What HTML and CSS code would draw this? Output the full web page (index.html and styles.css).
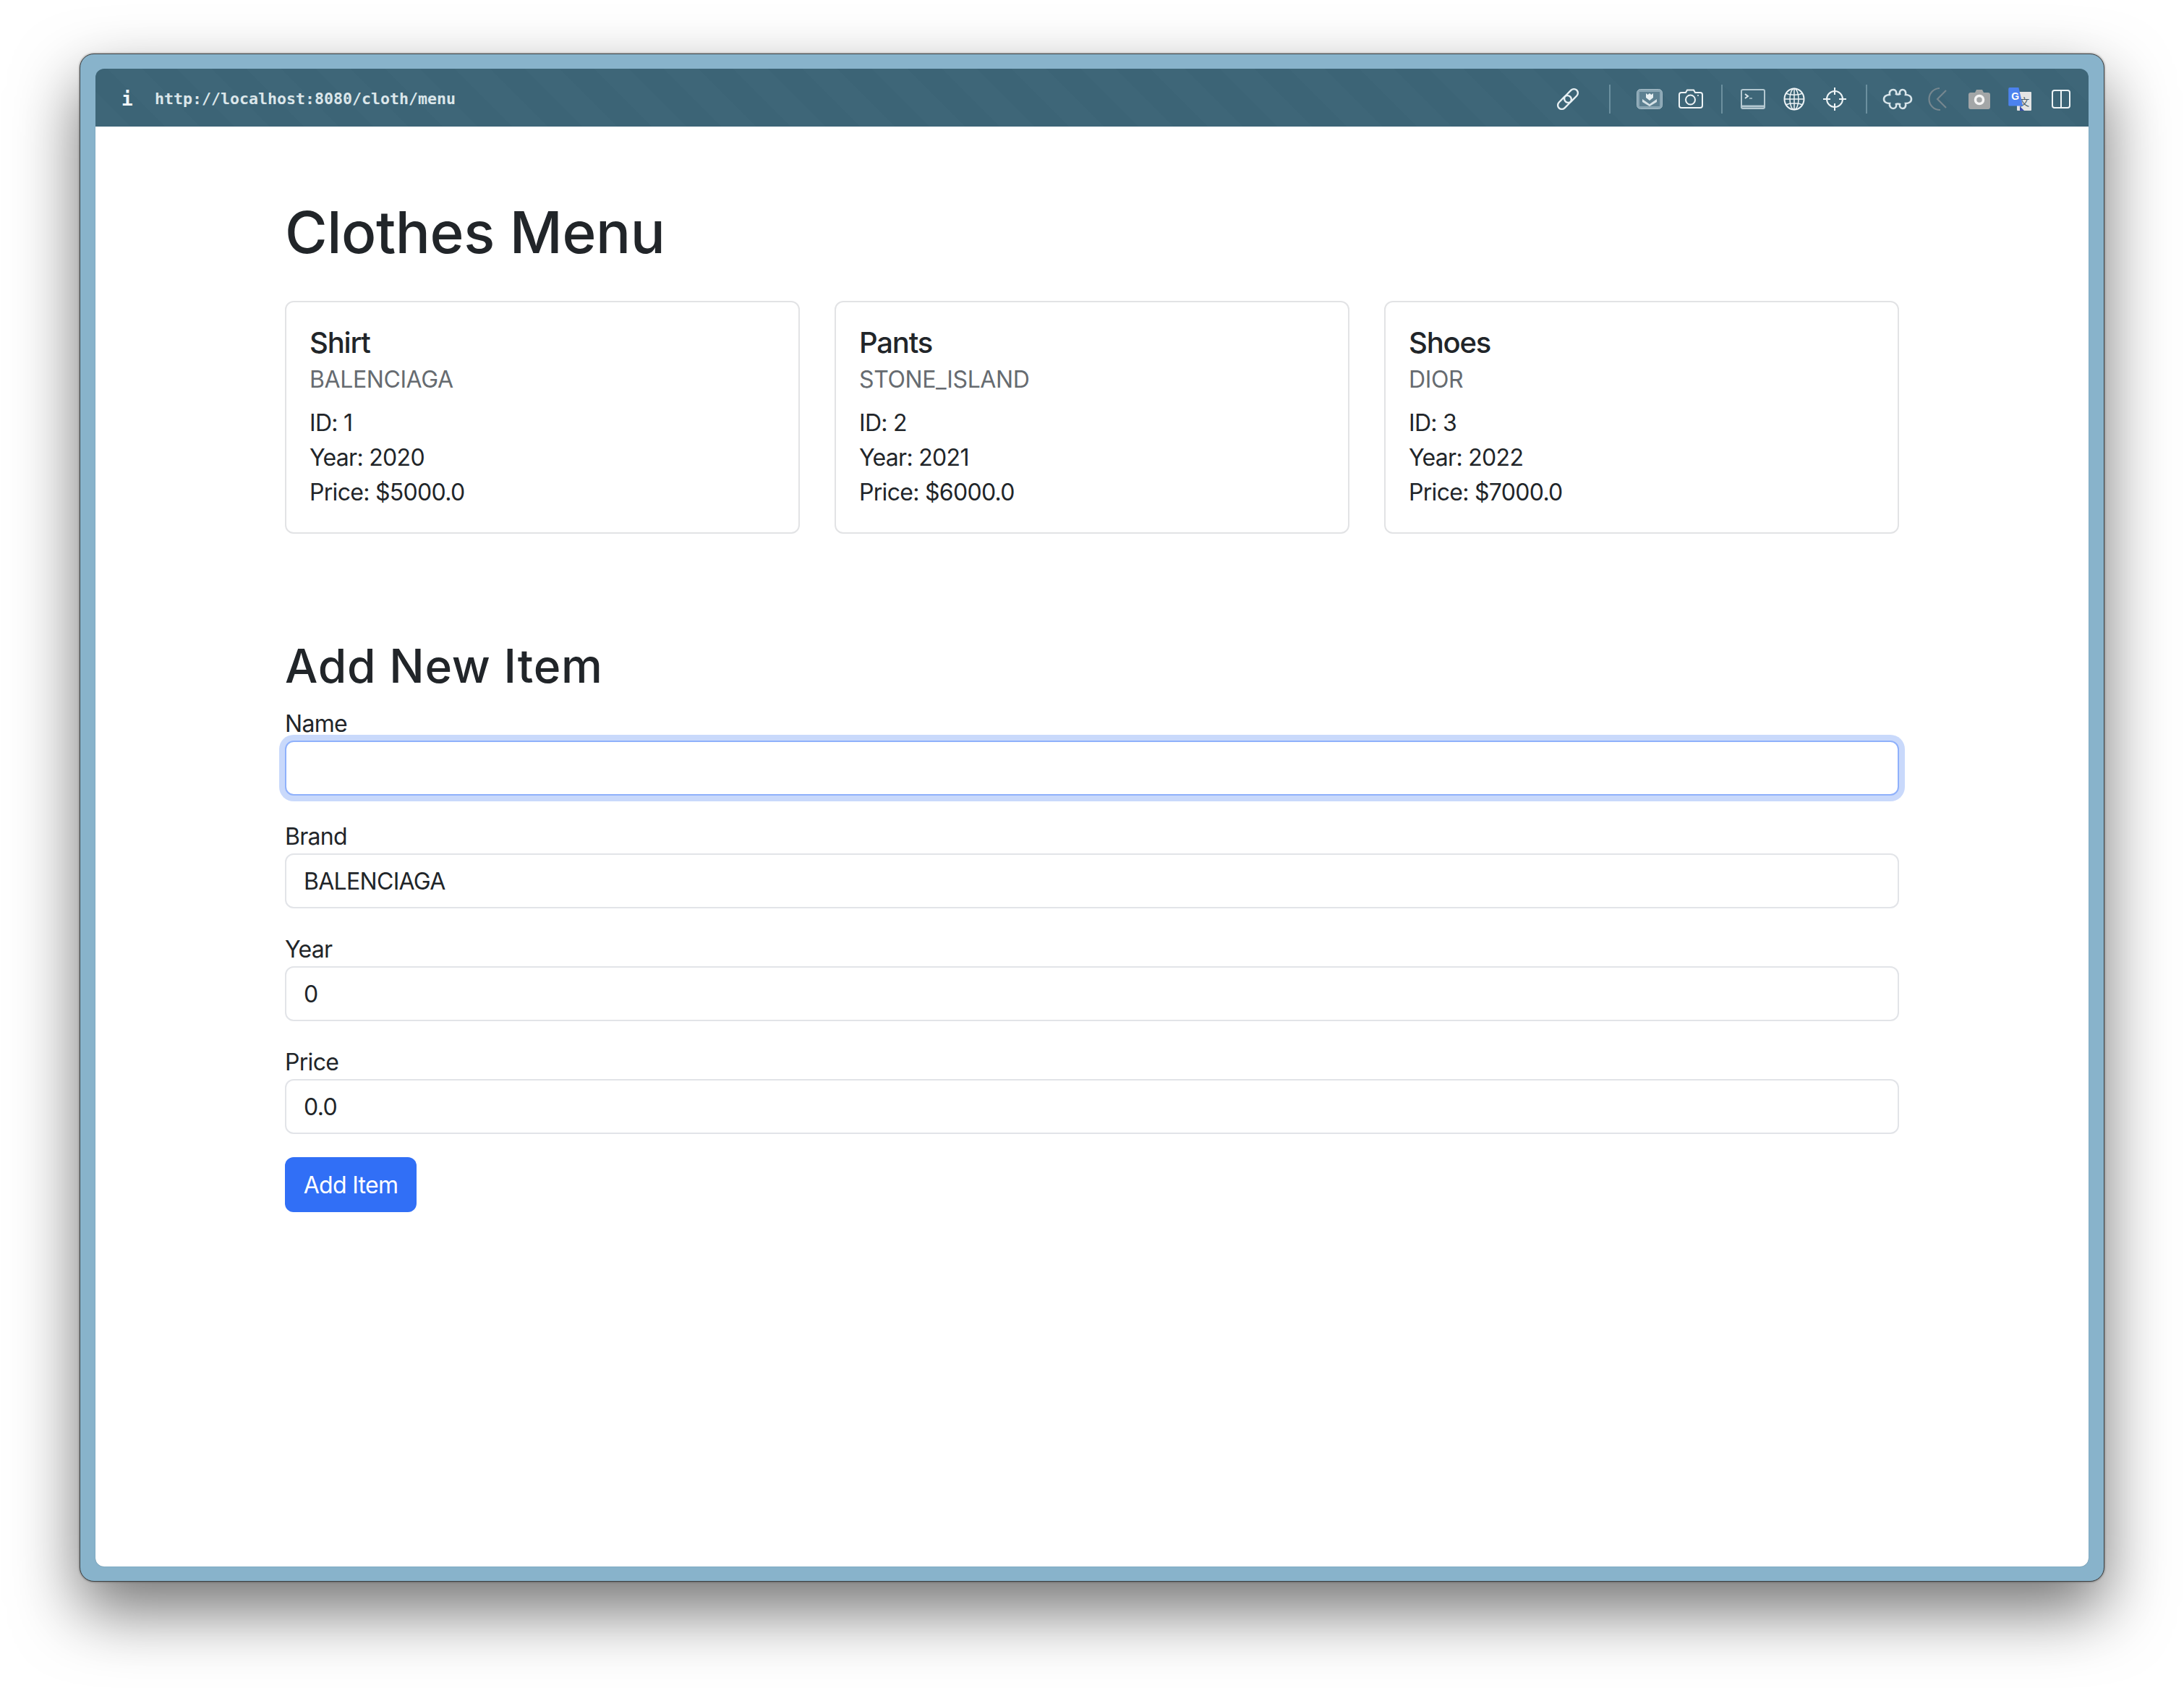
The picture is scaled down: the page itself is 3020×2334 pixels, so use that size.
FILE: index.html
```html
<!DOCTYPE html>
<html lang="en">
<head>
    <meta charset="UTF-8">
    <meta name="viewport" content="width=device-width, initial-scale=1.0">
    <title>Clothes Menu</title>
    <link rel="stylesheet" href="styles.css">
</head>
<body>
    <div class="window">
        <!-- browser toolbar -->
        <div class="toolbar">
            <span class="info">i</span>
            <span class="url">http://localhost:8080/cloth/menu</span>
            <div class="tools">
                <div class="tool link-tool">
                    <svg width="32" height="32" viewBox="0 0 32 32" fill="none" stroke="#e8f0f3" stroke-width="2.4">
                        <rect x="15" y="0.5" width="11" height="22" rx="5.5" transform="rotate(45 20.5 11.5)"/>
                        <rect x="6" y="9.5" width="11" height="22" rx="5.5" transform="rotate(45 11.5 20.5)"/>
                    </svg>
                </div>
                <span class="sep sep-first"></span>
                <div class="tool">
                    <svg width="36" height="28" viewBox="0 0 36 28">
                        <rect x="0.5" y="0.5" width="35" height="27" rx="5" fill="#8aa6b4" stroke="#a5bbc6"/>
                        <rect x="4" y="4" width="28" height="20" fill="#5d8091"/>
                        <path d="M13 6l2.500 2 2.500-2 2.500 2 2.500-2v6l-5 4-5-4z" fill="#e8f0f3"/>
                        <path d="M8 14l10 7 10-7v4l-10 6-10-6z" fill="#d5e1e6"/>
                    </svg>
                </div>
                <div class="tool">
                    <svg width="34" height="28" viewBox="0 0 34 28" fill="none" stroke="#eef4f6" stroke-width="2">
                        <path d="M4 5h6l2-3.500h9l2 3.500h7a3 3 0 0 1 3 3v15a3 3 0 0 1-3 3H4a3 3 0 0 1-3-3V8a3 3 0 0 1 3-3z"/>
                        <circle cx="16.500" cy="15" r="6.500"/>
                        <circle cx="27" cy="9" r="1" fill="#eef4f6" stroke="none"/>
                    </svg>
                </div>
                <span class="sep"></span>
                <div class="tool">
                    <svg width="34" height="28" viewBox="0 0 34 28" fill="none" stroke="#b4c8d1" stroke-width="2">
                        <rect x="1" y="1" width="32" height="26" rx="2"/>
                        <path d="M1 24h32" stroke-width="3"/>
                        <path d="M6 7l4 3-4 3" stroke="#dbe6ea"/>
                        <path d="M12 13h4" stroke="#8faab6"/>
                    </svg>
                </div>
                <div class="tool">
                    <svg width="30" height="32" viewBox="0 0 30 32" fill="none" stroke="#eef4f6" stroke-width="1.500">
                        <ellipse cx="15" cy="16" rx="13.500" ry="14.500" stroke-width="2"/>
                        <ellipse cx="15" cy="16" rx="6" ry="14.500"/>
                        <path d="M15 1.500v29M3 8c7 3 17 3 24 0M1.500 16h27M3 24c7-3 17-3 24 0"/>
                    </svg>
                </div>
                <div class="tool">
                    <svg width="34" height="34" viewBox="0 0 34 34" fill="none" stroke="#eef4f6" stroke-width="2">
                        <circle cx="17" cy="17" r="11"/>
                        <path d="M17 1v10M17 23v10M1 17h10M23 17h10"/>
                    </svg>
                </div>
                <span class="sep"></span>
                <div class="tool">
                    <svg class="soft" width="42" height="30" viewBox="0 0 42 30" fill="none" stroke="#d8e5ea" stroke-width="2.600">
                        <path d="M2 15C2 11 6 9 10 9C9 4 12 2 15 2C18 2 20 5 19 8Q21 9 24 8C23 5 25 2 28 2C31 2 33 5 32 9C36 9 40 11 40 15C40 19 36 21 32 21C33 25 31 28 28 28C25 28 23 25 24 22Q21 21 19 22C20 25 18 28 15 28C12 28 9 25 10 21C6 21 2 19 2 15Z"/>
                    </svg>
                </div>
                <div class="tool">
                    <svg width="30" height="34" viewBox="0 0 30 34" fill="none" stroke="#76878f" stroke-width="2.200">
                        <path d="M17 2A15 15 0 0 0 18 32"/>
                        <path d="M26 5L14 17l12 12"/>
                    </svg>
                </div>
                <div class="tool">
                    <svg width="30" height="28" viewBox="0 0 30 28">
                        <path d="M3 5h6l2-4h8l2 4h6a3 3 0 0 1 3 3v17a3 3 0 0 1-3 3H3a3 3 0 0 1-3-3V8a3 3 0 0 1 3-3z" fill="#a3a6a7"/>
                        <circle cx="15" cy="15" r="5.500" fill="none" stroke="#f5f5f5" stroke-width="3.500"/>
                    </svg>
                </div>
                <div class="tool">
                    <div class="translate">
                        <span class="tr-back">文</span>
                        <span class="tr-fold"></span>
                        <span class="tr-front">G</span>
                    </div>
                </div>
                <div class="tool">
                    <svg width="26" height="26" viewBox="0 0 26 26" fill="none" stroke="#eef4f6" stroke-width="2">
                        <rect x="1" y="1" width="24" height="24" rx="3"/>
                        <path d="M13 1v24"/>
                    </svg>
                </div>
            </div>
        </div>

        <div class="content">
            <div class="container">
                <h1>Clothes Menu</h1>

                <div class="card-row">
                    <div class="card">
                        <h5>Shirt</h5>
                        <h6>BALENCIAGA</h6>
                        <p>ID: 1</p>
                        <p>Year: 2020</p>
                        <p>Price: $5000.0</p>
                    </div>
                    <div class="card">
                        <h5>Pants</h5>
                        <h6>STONE_ISLAND</h6>
                        <p>ID: 2</p>
                        <p>Year: 2021</p>
                        <p>Price: $6000.0</p>
                    </div>
                    <div class="card">
                        <h5>Shoes</h5>
                        <h6>DIOR</h6>
                        <p>ID: 3</p>
                        <p>Year: 2022</p>
                        <p>Price: $7000.0</p>
                    </div>
                </div>

                <h2>Add New Item</h2>
                <form>
                    <label for="name">Name</label>
                    <input type="text" id="name" class="focused">

                    <label for="brand">Brand</label>
                    <input type="text" id="brand" value="BALENCIAGA">

                    <label for="year">Year</label>
                    <input type="text" id="year" value="0">

                    <label for="price">Price</label>
                    <input type="text" id="price" value="0.0">

                    <button type="button">Add Item</button>
                </form>
            </div>
        </div>
    </div>
</body>
</html>
```

FILE: styles.css
```css
* {
    box-sizing: border-box;
}

body {
    margin: 0;
    padding: 74px 110px 147px;
    height: 2334px;
    background-color: #fff;
    font-family: "Inter", "Liberation Sans", sans-serif;
    font-size: 32px;
    line-height: 48px;
    letter-spacing: -0.7px;
    color: #212529;
}

.window {
    height: 100%;
    display: flex;
    flex-direction: column;
    padding: 20px 21px 20px 21px;
    background-color: #88b3cb;
    border: 1px solid #3d4143;
    border-radius: 20px;
    box-shadow: 0 40px 90px rgba(0, 0, 0, 0.55), 0 0 3px rgba(0, 0, 0, 0.5);
}

/* browser toolbar */
.toolbar {
    height: 80px;
    flex-shrink: 0;
    display: flex;
    align-items: center;
    padding: 3px 10px 0 36px;
    border-radius: 12px 12px 0 0;
    background: repeating-linear-gradient(45deg, #3e6678 0, #3e6678 34px, #3c6476 34px, #3c6476 68px);
    letter-spacing: 0;
}

.info {
    font-family: "DejaVu Sans Mono", monospace;
    font-weight: bold;
    font-size: 26px;
    color: #f2f7f9;
    width: 46px;
}

.url {
    font-family: "DejaVu Sans Mono", monospace;
    font-weight: bold;
    font-size: 21.6px;
    color: #dbe6ea;
}

.tools {
    margin-left: auto;
    display: flex;
    align-items: center;
}

.tool {
    width: 56.5px;
    display: flex;
    justify-content: center;
    align-items: center;
}

.tool svg {
    display: block;
}

.tool .soft {
    filter: blur(0.7px);
}

.link-tool {
    margin-right: 29px;
}

.sep {
    width: 2px;
    height: 40px;
    margin: 0 14px;
    background-color: #6c909f;
}

.sep-first {
    margin: 0 26px 0 0;
}

/* google translate icon */
.translate {
    position: relative;
    width: 32px;
    height: 32px;
}

.tr-back {
    position: absolute;
    right: 0;
    top: 6px;
    width: 20px;
    height: 26px;
    background-color: #e4e4e4;
    border-radius: 1px;
    font-family: "Noto Sans CJK SC", sans-serif;
    font-size: 14px;
    line-height: 26px;
    text-align: center;
    color: #4d5d65;
}

.tr-fold {
    position: absolute;
    left: 16px;
    bottom: 0;
    width: 0;
    height: 0;
    border-left: 6px solid #3a4db0;
    border-top: 6px solid transparent;
}

.tr-front {
    position: absolute;
    left: 0;
    top: 0;
    width: 20px;
    height: 26px;
    padding-right: 0;
    background-color: #4c82ee;
    border-radius: 2px 0 0 2px;
    clip-path: polygon(0 0, 70% 0, 100% 100%, 0 100%);
    font-family: "Liberation Sans", sans-serif;
    font-weight: bold;
    font-size: 14px;
    line-height: 24px;
    text-indent: 4px;
    color: #fff;
}

/* page */
.content {
    flex: 1;
    background-color: #fff;
    border-radius: 0 0 12px 12px;
    box-shadow: 0 0 1px #3e6678;
}

.container {
    width: 2232px;
    margin: 0 auto;
    padding-top: 98px;
}

h1 {
    margin: 0 0 47px;
    font-size: 80px;
    line-height: 96px;
    font-weight: 500;
    letter-spacing: -0.4px;
}

.card-row {
    display: grid;
    grid-template-columns: repeat(3, 1fr);
    gap: 48px;
    margin-bottom: 144px;
}

.card {
    height: 322px;
    padding: 32px;
    border: 2px solid #e2e3e5;
    border-radius: 12px;
}

h5 {
    margin: 0 0 3px;
    font-size: 40px;
    line-height: 48px;
    font-weight: 500;
    letter-spacing: -1.2px;
}

h6 {
    margin: 0 0 12px;
    font-size: 32px;
    line-height: 48px;
    font-weight: 400;
    letter-spacing: -0.4px;
    color: #666b70;
}

.card p {
    margin: 0;
}

h2 {
    margin: 0 0 17px;
    font-size: 64px;
    line-height: 77px;
    font-weight: 500;
    letter-spacing: 0.8px;
}

label {
    display: block;
    height: 47px;
    padding-top: 1px;
}

input {
    display: block;
    width: 100%;
    height: 76px;
    margin-bottom: 32px;
    padding: 0 24px;
    border: 2px solid #e2e4e8;
    border-radius: 12px;
    font-family: inherit;
    font-size: 32px;
    letter-spacing: -0.7px;
    color: #212529;
    outline: none;
}

label + input {
    margin-top: 1px;
}

input.focused {
    border-color: #8fb1fb;
    box-shadow: 0 0 0 8px #c9d9fb;
}

button {
    display: block;
    width: 182px;
    height: 76px;
    padding: 0;
    border: none;
    border-radius: 12px;
    background-color: #316ff6;
    color: #fff;
    font-family: inherit;
    font-size: 32px;
    letter-spacing: -0.7px;
}
```
